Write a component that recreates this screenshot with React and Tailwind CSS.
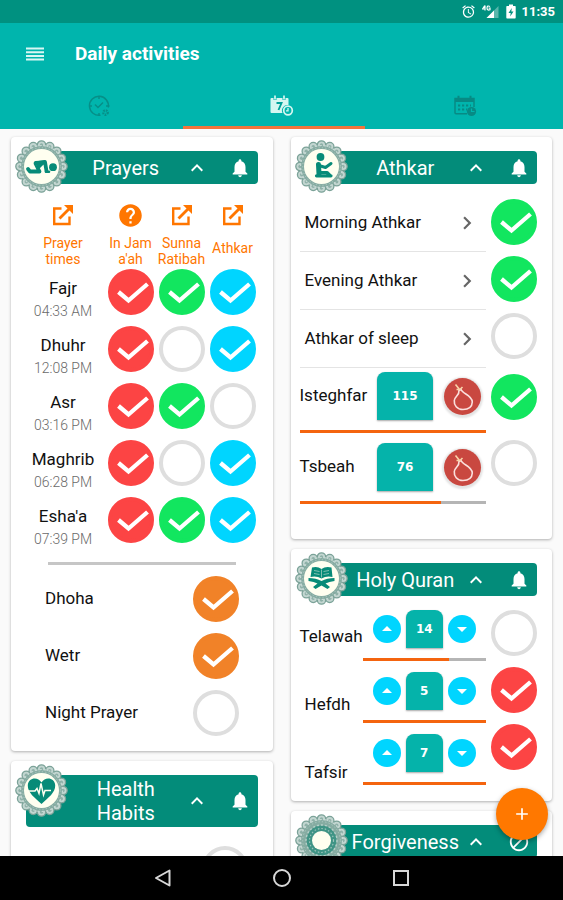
import React, { useState } from "react";
import {
  MdAdd,
  MdAlarm,
  MdArrowDropDown,
  MdArrowDropUp,
  MdBlock,
  MdHelp,
  MdKeyboardArrowRight,
  MdKeyboardArrowUp,
  MdNotifications,
} from "react-icons/md";

const checkColors = {
  red: "checked:bg-[#fc4444] checked:border-[#fc4444]",
  green: "checked:bg-[#12e65f] checked:border-[#12e65f]",
  cyan: "checked:bg-[#00d5ff] checked:border-[#00d5ff]",
  orange: "checked:bg-[#f18228] checked:border-[#f18228]",
};

const Check = ({ label, color = "green", checked = false }) => {
  const [on, setOn] = useState(checked);

  return (
    <label className="relative block size-[46px] shrink-0 cursor-pointer">
      <input
        type="checkbox"
        aria-label={label}
        checked={on}
        onChange={(e) => setOn(e.target.checked)}
        className={`block size-[46px] appearance-none rounded-full border-4 border-[#dedede] bg-white ${checkColors[color]}`}
      />
      {on && (
        <svg viewBox="0 0 46 46" className="pointer-events-none absolute inset-0 size-full">
          <path d="M10.500 23 L20.500 31.500 L39.500 15" fill="none" stroke="#fff" strokeWidth="4.300" />
        </svg>
      )}
    </label>
  );
};

const scallops = Array.from({ length: 16 }, (_, i) => {
  const a = (i * Math.PI) / 8;
  return [26.5 + 21.5 * Math.cos(a), 26.5 + 21.5 * Math.sin(a)];
});

// Round lace frame with the drawing of the section inside
const Badge = ({ hole = 17.5, children }) => (
  <svg
    viewBox="0 0 53 53"
    className="pointer-events-none absolute -top-[11px] -left-[11px] size-[53px]"
    aria-hidden="true"
  >
    {scallops.map(([x, y], i) => (
      <g key={i}>
        <circle cx={x} cy={y} r="4.200" fill="#c3d6d1" stroke="#7ba298" strokeWidth="1.300" />
        <circle cx={x} cy={y} r="1.700" fill="#8fb1a8" />
      </g>
    ))}
    <circle cx="26.500" cy="26.500" r="20.500" fill="#86aca2" />
    <circle cx="26.500" cy="26.500" r="21" fill="none" stroke="#c8dad5" strokeWidth="1.200" strokeDasharray="1.800 2.600" />
    <circle cx="26.500" cy="26.500" r="18.800" fill="none" stroke="#b3cbc4" strokeWidth="1" strokeDasharray="1.200 2.200" />
    {hole < 15 && (
      <>
        <circle cx="26.500" cy="26.500" r="15" fill="#3f9485" />
        <circle cx="26.500" cy="26.500" r="15.500" fill="none" stroke="#b5d0c9" strokeWidth="1.400" strokeDasharray="2 2" />
        <circle cx="26.500" cy="26.500" r="12" fill="none" stroke="#9cc4bb" strokeWidth="1.200" strokeDasharray="1.500 2" />
      </>
    )}
    <circle cx="26.500" cy="26.500" r={hole} fill="#fffff0" />
    {children}
  </svg>
);

const Prostration = () => (
  <g fill="none" stroke="#078b78" strokeLinejoin="round" strokeLinecap="round">
    <circle cx="38" cy="27.200" r="3.900" fill="#078b78" stroke="none" />
    <path d="M13 29 L15 31.500 L24.500 31.500 L20.500 23.500 L30 22 L31.500 31" strokeWidth="3.800" />
    <path d="M20.500 22.500 L29 22 L24.500 26.500 Z" fill="#078b78" strokeWidth="3" />
    <path d="M31 31.800 L34 31.800" strokeWidth="2.600" />
  </g>
);

const Dua = () => (
  <g fill="none" stroke="#078b78" strokeLinejoin="round" strokeLinecap="round">
    <circle cx="25.500" cy="17" r="3.900" fill="#078b78" stroke="none" />
    <path d="M23.500 24.500 L24 34" strokeWidth="5" />
    <path d="M24 25.500 L30.500 27.500 L36 23.500" strokeWidth="3" />
    <path d="M21.500 35.800 L36 35.800 M25 32.500 L32 32.500 L35 35.500" strokeWidth="3.200" />
  </g>
);

const QuranStand = () => (
  <g>
    <path
      d="M17 15.500 Q22.500 14 26.500 17 Q30.500 14 36.500 15.500 L37.500 25 Q31.500 23.500 26.500 26.500 Q21.500 23.500 15.500 25 Z"
      fill="#078b78"
    />
    <path d="M26.500 17.500 V25.500 M19 18.500 L24.500 19.500 M19 21.500 L24.500 22.500 M34 18.500 L28.500 19.500 M34 21.500 L28.500 22.500" stroke="#7fbfb0" strokeWidth="1" />
    <path d="M13.500 26 Q21 26 26.500 29 Q32 26 39.500 26 L39.500 29 Q34 29.500 30.500 31.500 L35 35 L32.500 37 L26.500 33.500 L20.500 37 L18 35 L22.500 31.500 Q19 29.500 13.500 29 Z" fill="#078b78" />
  </g>
);

const HeartPulse = () => (
  <g>
    <path
      d="M26.500 40 C20 34 12.500 28.500 12.800 21.500 C13 14 22.500 12 26.500 18.500 C30.500 12 40 14 40.200 21.500 C40.500 28.500 33 34 26.500 40 Z"
      fill="#078b78"
    />
    <path d="M12 27 H20 L22 24.500 L24 29.500 L26 19.500 L28.500 31 L30 26.500 H36" fill="none" stroke="#fffff0" strokeWidth="1.500" />
  </g>
);

const SectionHeader = ({ title, badge, hole, muted }) => (
  <header className="relative mx-[15px] mt-[14px] flex min-h-[33px] items-center rounded-sm bg-[#038c7a] py-0.5 pr-[7px] text-white">
    <Badge hole={hole}>{badge}</Badge>
    <h2 className="ml-11 flex min-w-0 flex-1 justify-center text-center text-[20px] leading-6">
      <span className="whitespace-pre-line">{title}</span>
    </h2>
    <button type="button" aria-label="Collapse" className="flex w-[30px] justify-center">
      <MdKeyboardArrowUp className="size-6" />
    </button>
    <button type="button" aria-label="Reminder" className="ml-[17px]">
      {muted ? <MdBlock className="size-[22px]" /> : <MdNotifications className="size-[22px]" />}
    </button>
  </header>
);

const Card = ({ children, className = "" }) => (
  <section className={`flow-root rounded-sm bg-white shadow-[0_1px_3px_rgba(0,0,0,0.3)] ${className}`}>
    {children}
  </section>
);

const OpenIcon = () => (
  <svg viewBox="0 0 22 22" className="size-[22px]" fill="none" stroke="#ff7600" aria-hidden="true">
    <path d="M9.500 4.500 H2.200 V20 H17.500 V12.500" strokeWidth="2.400" />
    <path d="M7.500 14.500 L17.500 4.500" strokeWidth="2.800" />
    <path d="M12 1 H21 V10 Z" fill="#ff7600" stroke="none" />
  </svg>
);

const prayerColumns = [
  { lines: ["Prayer", "times"], width: "w-[84px]" },
  { lines: ["In Jam", "a'ah"], width: "w-[51px]", help: true },
  { lines: ["Sunna", "Ratibah"], width: "w-[51px]" },
  { lines: ["Athkar"], width: "w-[51px]" },
];

const prayers = [
  { name: "Fajr", time: "04:33 AM", done: [true, true, true] },
  { name: "Dhuhr", time: "12:08 PM", done: [true, false, true] },
  { name: "Asr", time: "03:16 PM", done: [true, true, false] },
  { name: "Maghrib", time: "06:28 PM", done: [true, false, true] },
  { name: "Esha'a", time: "07:39 PM", done: [true, true, true] },
];

const extraPrayers = [
  { name: "Dhoha", done: true },
  { name: "Wetr", done: true },
  { name: "Night Prayer", done: false },
];

const columnColors = ["red", "green", "cyan"];

const PrayersCard = () => (
  <Card className="pb-[15px]">
    <SectionHeader title="Prayers" badge={<Prostration />} />
    <div className="mt-5 pr-[15px] pl-2.5">
      <table className="w-full table-fixed border-collapse">
        <thead>
          <tr className="h-[65px] align-top">
            {prayerColumns.map((col) => (
              <th key={col.lines[0]} scope="col" className={`${col.width} p-0 font-normal text-[#ff7600]`}>
                <span className="flex h-[22px] items-center justify-center">
                  {col.help ? <MdHelp className="size-[27px]" /> : <OpenIcon />}
                </span>
                <span className="mt-[9px] flex min-h-[26px] flex-col items-center justify-center text-[14px] leading-4 whitespace-nowrap">
                  {col.lines.map((line) => (
                    <span key={line}>{line}</span>
                  ))}
                </span>
              </th>
            ))}
          </tr>
        </thead>
        <tbody>
          {prayers.map((prayer) => (
            <tr key={prayer.name} className="h-[57px] align-top">
              <th scope="row" className="p-0 pt-2 text-center font-normal">
                <span className="block text-[17px] leading-[22px]">{prayer.name}</span>
                <span className="mt-1 block text-[14px] leading-4 font-light text-[#6a6a6a]">{prayer.time}</span>
              </th>
              {prayer.done.map((done, i) => (
                <td key={i} className="p-0">
                  <div className="flex justify-center">
                    <Check
                      label={`${prayer.name} ${prayerColumns[i + 1].lines.join(" ")}`}
                      color={columnColors[i]}
                      checked={done}
                    />
                  </div>
                </td>
              ))}
            </tr>
          ))}
        </tbody>
      </table>
    </div>
    <hr className="mx-[37px] mt-2 border-0 border-t-3 border-[#c6c6c6]" />
    <ul className="mt-[11px] flex flex-col gap-[11px] px-[34px]">
      {extraPrayers.map((item) => (
        <li key={item.name} className="flex items-center justify-between text-[17px]">
          <span>{item.name}</span>
          <Check label={item.name} color="orange" checked={item.done} />
        </li>
      ))}
    </ul>
  </Card>
);

const Progress = ({ label, value }) => (
  <div
    role="progressbar"
    aria-label={label}
    aria-valuenow={value}
    aria-valuemin={0}
    aria-valuemax={100}
    className="h-[3px] bg-[#b5b5b5]"
  >
    <div className="h-full bg-[#f4640f]" style={{ width: `${value}%` }} />
  </div>
);

const BeadsButton = ({ label }) => (
  <button
    type="button"
    aria-label={`Count ${label}`}
    className="flex size-[37px] items-center justify-center rounded-full bg-[#c94840] shadow-[0_1px_2px_2px_#e4e4e4]"
  >
    <svg viewBox="0 0 37 37" className="size-full" fill="none">
      <path
        d="M17 11.500 C18.500 16 28 17 28.300 24 C28 29.500 24 31.500 19 31.500 C13 31.500 9.800 27 10.300 22.500 C11 18 15.500 17.500 15 12.500 Z"
        stroke="#fbe0dd"
        strokeWidth="1.600"
      />
      <path d="M16 12 L11.500 6.500 M12.500 11.500 L16 11.500 L18.500 9" stroke="#f9d3a8" strokeWidth="1.600" />
    </svg>
  </button>
);

const athkar = [
  { name: "Morning Athkar" },
  { name: "Evening Athkar" },
  { name: "Athkar of sleep" },
];

const counters = [
  { name: "Isteghfar", count: 115, progress: 100 },
  { name: "Tsbeah", count: 76, progress: 76 },
];

const AthkarCard = () => (
  <Card className="pb-[35px]">
    <SectionHeader title="Athkar" badge={<Dua />} />
    <div className="flex gap-[5px] pr-[15px] pl-[9px]">
      <div className="min-w-0 flex-1 pt-2.5">
        {athkar.map((item) => (
          <a
            key={item.name}
            href="#athkar"
            className="flex h-[58px] items-center justify-between border-b border-[#e4e4e4] pr-1.5 pl-[5px] text-[17px]"
          >
            {item.name}
            <MdKeyboardArrowRight className="size-[26px] text-[#666]" />
          </a>
        ))}
        <div className="flex flex-col gap-[10px] pt-1">
          {counters.map((item) => (
            <div key={item.name}>
              <div className="flex items-center pr-[5px]">
                <span className="flex-1 text-[17px]">{item.name}</span>
                <span className="mr-[11px] flex h-12 w-14 items-center justify-center rounded-t-lg bg-[#05b3aa] font-['DejaVu_Sans'] text-[12px] font-bold text-white shadow-[0_1px_2px_rgba(0,0,0,0.35)]">
                  {item.count}
                </span>
                <BeadsButton label={item.name} />
              </div>
              <div className="mt-[10px]">
                <Progress label={item.name} value={item.progress} />
              </div>
            </div>
          ))}
        </div>
      </div>
      <div className="pt-[15px]">
        <div className="flex flex-col gap-[11px]">
          <Check label="Morning Athkar" checked />
          <Check label="Evening Athkar" checked />
          <Check label="Athkar of sleep" />
        </div>
        <div className="mt-[15px] flex flex-col gap-5">
          <Check label="Isteghfar" checked />
          <Check label="Tsbeah" />
        </div>
      </div>
    </div>
  </Card>
);

const quran = [
  { name: "Telawah", count: 14, progress: 70, done: false },
  { name: "Hefdh", count: 5, progress: 100, done: true },
  { name: "Tafsir", count: 7, progress: 100, done: true },
];

const StepButton = ({ label, children }) => (
  <button
    type="button"
    aria-label={label}
    className="flex size-7 shrink-0 items-center justify-center rounded-full bg-[#00d5ff] text-white"
  >
    {children}
  </button>
);

const QuranCard = () => (
  <Card className="pb-4">
    <SectionHeader title="Holy Quran" badge={<QuranStand />} />
    <div className="flex pr-[15px] pl-[9px]">
      <div className="flex w-[63px] flex-col gap-[46px] pt-[29px] text-[17px] leading-[22px]">
        <span>Telawah</span>
        <span className="pl-[5px]">Hefdh</span>
        <span className="pl-[5px]">Tafsir</span>
      </div>
      <div className="flex min-w-0 flex-1 flex-col gap-[11px] pt-[14px]">
        {quran.map((item) => (
          <div key={item.name}>
            <div className="flex items-center justify-center gap-[5px]">
              <StepButton label={`Increase ${item.name}`}>
                <MdArrowDropUp className="size-6" />
              </StepButton>
              <span className="flex h-[38px] w-[37px] items-center justify-center rounded-t-lg bg-[#05b3aa] font-['DejaVu_Sans'] text-[12px] font-bold text-white shadow-[0_1px_2px_rgba(0,0,0,0.35)]">
                {item.count}
              </span>
              <StepButton label={`Decrease ${item.name}`}>
                <MdArrowDropDown className="size-6" />
              </StepButton>
            </div>
            <div className="mt-[10px]">
              <Progress label={item.name} value={item.progress} />
            </div>
          </div>
        ))}
      </div>
      <div className="ml-[5px] flex flex-col gap-[11px] pt-[14px]">
        {quran.map((item) => (
          <Check key={item.name} label={item.name} color="red" checked={item.done} />
        ))}
      </div>
    </div>
  </Card>
);

const StatusBar = () => (
  <div className="flex h-[23px] shrink-0 items-center justify-end gap-1.5 bg-[#009180] pr-2 text-white">
    <MdAlarm className="size-[15px]" />
    <svg viewBox="0 0 18 14" className="h-[14px] w-[18px]" fill="#fff" aria-hidden="true">
      <path d="M2.800 0.500 L0.500 4 H3 M3 0.500 V5.500" fill="none" stroke="#fff" strokeWidth="1.200" />
      <path d="M8 1.500 Q5 0 5 3 Q5 5.800 8 4.800 V3 H6.500" fill="none" stroke="#fff" strokeWidth="1.200" />
      <path d="M16.500 1 V13 H4.500 Z" opacity="0.350" />
      <path d="M12 5.500 V13 H4.500 Z" />
    </svg>
    <svg viewBox="0 0 10 15" className="h-[15px] w-[10px]" aria-hidden="true">
      <path d="M3 0.500 H7 V2 H9 Q9.700 2 9.700 2.700 V13.500 Q9.700 14.500 9 14.500 H1 Q0.300 14.500 0.300 13.500 V2.700 Q0.300 2 1 2 H3 Z" fill="#fff" />
      <path d="M5.800 4 L2.500 9 H4.700 L4.200 12.500 L7.500 7.500 H5.300 Z" fill="#009180" />
    </svg>
    <span className="text-[13px] leading-4 font-bold">11:35</span>
  </div>
);

const AppBar = () => (
  <div className="shrink-0 bg-[#00b5ad]">
    <div className="flex h-[62px] items-center pl-[26px] text-white">
      <button type="button" aria-label="Menu">
        <svg viewBox="0 0 18 14" className="h-[14px] w-[18px]" fill="#d9f7f4">
          <path d="M0 0.500 H18 V2.500 H0 Z M0 4.200 H18 V6.200 H0 Z M0 7.900 H18 V9.900 H0 Z M0 11.500 H18 V13.500 H0 Z" />
        </svg>
      </button>
      <h1 className="ml-[31px] text-[19px] font-bold">Daily activities</h1>
    </div>
    <nav className="grid grid-cols-3 px-[7px]">
      <button type="button" aria-label="Today" className="flex h-[41px] items-center justify-center text-[#068f88]">
        <svg viewBox="0 0 22 22" className="size-[22px]" fill="none" stroke="currentColor" strokeWidth="1.500">
          <path d="M20.300 12.500 A9.500 9.500 0 1 0 12.500 20.200" />
          <path d="M7 9.500 L10 12.500 L15 7.500" />
          <path d="M11 1.500 V4 M1.500 11 H4 M18 11 H21.500 M11 18 V20.500" />
          <circle cx="17.500" cy="17.500" r="2.200" strokeWidth="2.400" strokeDasharray="1.500 0.900" />
        </svg>
      </button>
      <button type="button" aria-label="Daily" className="flex h-[41px] items-center justify-center text-[#d5f7f1]">
        <svg viewBox="0 0 25 22" className="h-[22px] w-[25px]">
          <path d="M2.500 3 H18.500 Q19.500 3 19.500 4 V10 A5.600 5.600 0 0 0 13.500 18 H2.500 Q1.500 18 1.500 17 V4 Q1.500 3 2.500 3 Z" fill="currentColor" />
          <path d="M6 0.500 V5 M15 0.500 V5" stroke="#00b5ad" strokeWidth="3" />
          <path d="M6 0.500 V4.500 M15 0.500 V4.500" stroke="currentColor" strokeWidth="1.700" />
          <path d="M7.500 8 H12.500 L9.500 15" fill="none" stroke="#00a29a" strokeWidth="1.900" />
          <circle cx="19" cy="15.500" r="4.300" fill="#00b5ad" stroke="currentColor" strokeWidth="1.700" />
          <path d="M19 13 V15.800 H17" fill="none" stroke="currentColor" strokeWidth="1.300" />
        </svg>
      </button>
      <button type="button" aria-label="Monthly" className="flex h-[41px] items-center justify-center text-[#078a84]">
        <svg viewBox="0 0 24 22" className="h-[22px] w-6" fill="none" stroke="currentColor" strokeWidth="1.500">
          <path d="M14 18.800 H3 Q2 18.800 2 17.800 V3.500 H21 V12" />
          <path d="M2 5 H21" strokeWidth="4" />
          <path d="M5.500 0.800 V4 M17.500 0.800 V4" strokeWidth="2" />
          <path d="M5 10.500 H18 M5 14.500 H14" strokeWidth="2" strokeDasharray="2.200 1.800" />
          <circle cx="18.500" cy="16.500" r="4.600" fill="currentColor" stroke="none" />
          <path d="M18.500 13.500 V16.500 H21.500" stroke="#00b5ad" strokeWidth="1.200" />
        </svg>
      </button>
    </nav>
    {/* Active tab line */}
    <div className="grid grid-cols-3 pr-[15px]">
      <div className="col-start-2 h-[3px] bg-[#f4743b]" />
    </div>
  </div>
);

const BottomNav = () => (
  <nav className="flex h-11 shrink-0 items-center justify-center bg-black">
    <button type="button" aria-label="Back" className="flex w-[119px] justify-center">
      <svg viewBox="0 0 20 20" className="size-5" fill="none" stroke="#d8d8d8" strokeWidth="2">
        <path d="M16.500 2.500 V17.500 L3 10 Z" strokeLinejoin="round" />
      </svg>
    </button>
    <button type="button" aria-label="Home" className="flex w-[119px] justify-center">
      <svg viewBox="0 0 20 20" className="size-5" fill="none" stroke="#d8d8d8" strokeWidth="2">
        <circle cx="10" cy="10" r="8" />
      </svg>
    </button>
    <button type="button" aria-label="Recent apps" className="flex w-[119px] justify-center">
      <svg viewBox="0 0 20 20" className="size-5" fill="none" stroke="#d8d8d8" strokeWidth="2">
        <path d="M3 3 H17 V17 H3 Z" />
      </svg>
    </button>
  </nav>
);

export default function App() {
  return (
    <div className="flex h-screen flex-col overflow-hidden bg-[#fafafa] font-[Roboto,sans-serif] text-[#111]">
      <StatusBar />
      <AppBar />
      <div className="relative flex min-h-0 flex-1 flex-col">
        <main className="grid min-h-0 flex-1 grid-cols-2 items-start gap-[18px] overflow-hidden px-[11px] pt-2">
          <div className="flex flex-col gap-2.5">
            <PrayersCard />
            <Card className="pb-[15px]">
              <SectionHeader title={"Health\nHabits"} badge={<HeartPulse />} />
              <div className="mt-[19px] flex justify-end pr-[25px]">
                <Check label="Health habit" />
              </div>
            </Card>
          </div>
          <div className="flex flex-col gap-2.5">
            <AthkarCard />
            <QuranCard />
            <Card className="pb-10">
              <SectionHeader title="Forgiveness" hole={9.5} muted />
            </Card>
          </div>
        </main>
        <button
          type="button"
          aria-label="Add activity"
          className="absolute right-[15px] bottom-4 flex size-[52px] items-center justify-center rounded-full bg-[#ff7800] text-white shadow-[0_2px_5px_rgba(0,0,0,0.35)]"
        >
          <MdAdd className="size-5" />
        </button>
      </div>
      <BottomNav />
    </div>
  );
}
